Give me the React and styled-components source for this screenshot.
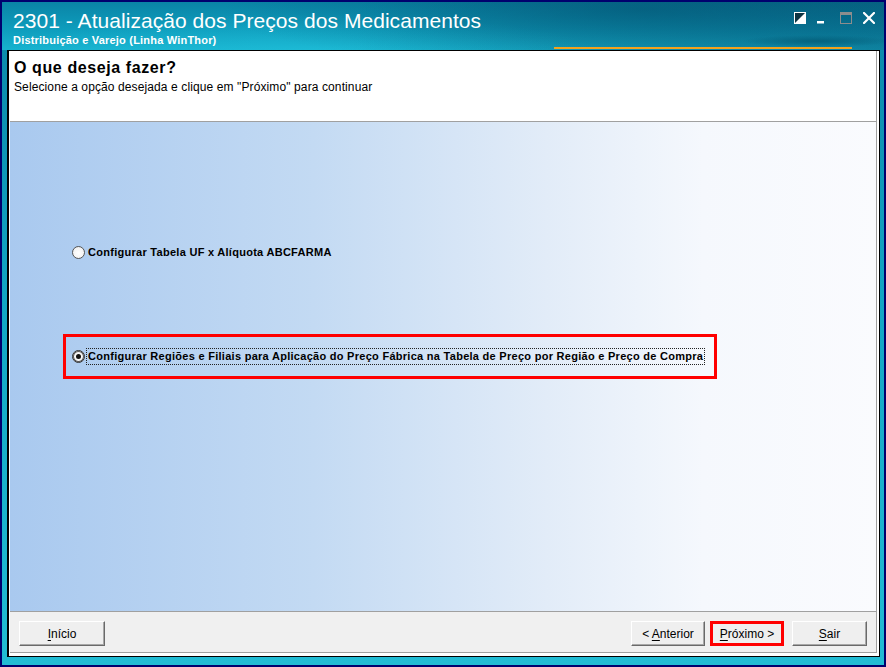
import React from 'react';
import styled, { createGlobalStyle } from 'styled-components';

const GlobalStyle = createGlobalStyle`
  html, body { margin: 0; padding: 0; background: #fff; }
  body { font-family: "Liberation Sans", Arial, sans-serif; overflow: hidden; }
  * { box-sizing: border-box; }
`;

const Window = styled.div`
  width: 886px;
  height: 667px;
  border: 2px solid #00006e;
  background: linear-gradient(180deg, #0a86a8 0%, #12a6c4 45%, #22bcd4 100%);
  display: flex;
  flex-direction: column;
`;

const TitleBar = styled.header`
  height: 48px;
  flex: none;
  display: flex;
  justify-content: space-between;
  align-items: flex-start;
  padding: 7px 9px 0 11px;
  background:
    linear-gradient(#f4a21c, #f4a21c) 552px 45px / 298px 2px no-repeat,
    radial-gradient(75px 6px at 815px 39px, rgba(4, 96, 124, 0.95), rgba(4, 96, 124, 0)),
    radial-gradient(420px 60px at 640px 8px, rgba(0, 70, 100, 0.45), rgba(0, 70, 100, 0)),
    radial-gradient(300px 40px at 300px 52px, rgba(40, 200, 225, 0.35), rgba(40, 200, 225, 0)),
    linear-gradient(90deg, rgba(0, 50, 80, 0) 40%, rgba(0, 50, 80, 0.35) 100%),
    linear-gradient(180deg, #0a84a6 0%, #0e9cbc 55%, #17b3cf 100%);
`;

const TitleText = styled.div`
  display: flex;
  flex-direction: column;
  color: #fff;
`;

const AppTitle = styled.div`
  font-size: 21px;
  line-height: 24px;
  letter-spacing: 0.05px;
  white-space: nowrap;
`;

const AppSubtitle = styled.div`
  font-size: 11px;
  font-weight: bold;
  line-height: 13px;
  letter-spacing: 0.2px;
  margin-top: 1px;
  white-space: nowrap;
`;

const Controls = styled.div`
  display: flex;
  gap: 11px;
  margin-top: 3px;
`;

const ControlIcon = styled.svg`
  width: 12px;
  height: 12px;
  display: block;
`;

const Panel = styled.main`
  flex: 1;
  margin: 0 4px 8px 5px;
  border: 1px solid #000;
  border-left-width: 2px;
  background: #fff;
  display: flex;
  padding: 0 2px 3px 1px;
  min-height: 0;
`;

const Inner = styled.div`
  flex: 1;
  display: flex;
  flex-direction: column;
  border-right: 1px solid #a0a0a0;
  border-bottom: 1px solid #a0a0a0;
  min-width: 0;
`;

const Header = styled.section`
  height: 71px;
  flex: none;
  border-bottom: 1px solid #a0a0a0;
  padding: 7px 0 0 4px;
  background: #fff;
`;

const HeaderTitle = styled.h1`
  margin: 0;
  font-size: 16px;
  line-height: 19px;
  font-weight: bold;
  letter-spacing: 0.6px;
  color: #000;
`;

const HeaderSub = styled.p`
  margin: 3px 0 0;
  font-size: 12px;
  line-height: 15px;
  letter-spacing: 0.11px;
  color: #000;
`;

const Body = styled.section`
  flex: 1;
  border-bottom: 1px solid #a0a0a0;
  background: linear-gradient(90deg, #a9c9ef 0%, #c3daf3 35%, #e2ecf8 62%, #f5f8fd 80%, #fafbfe 100%);
  display: flex;
  flex-direction: column;
  align-items: flex-start;
  gap: 59px;
  padding: 108px 0 0 53px;
`;

const OptionRow = styled.label`
  display: flex;
  align-items: center;
  height: 45px;
  border: 3px solid ${(p) => (p.$highlighted ? '#ff0000' : 'transparent')};
  padding: 0 9px 0 6px;
  cursor: default;
`;

const Radio = styled.span`
  width: 13px;
  height: 13px;
  flex: none;
  border-radius: 50%;
  border: 1px solid ${(p) => (p.$checked ? '#333' : '#555')};
  background: radial-gradient(circle at 50% 55%, #ffffff 0%, #f4f4f4 60%, #dcdcdc 100%);
  box-shadow: ${(p) => (p.$checked ? 'inset 0 0 0 1px #555' : 'none')};
  margin-right: 1px;
  display: flex;
  align-items: center;
  justify-content: center;
  &::after {
    content: '';
    width: 5px;
    height: 5px;
    border-radius: 50%;
    background: #111;
    display: ${(p) => (p.$checked ? 'block' : 'none')};
  }
`;

const OptionText = styled.span`
  font-size: 11px;
  font-weight: bold;
  line-height: 15px;
  letter-spacing: 0.28px;
  color: #000;
  padding: 0 1px;
  border: 1px dotted ${(p) => (p.$focused ? '#222' : 'transparent')};
  white-space: nowrap;
`;

const Footer = styled.footer`
  height: 40px;
  flex: none;
  background: #f0f0f0;
  display: flex;
  align-items: flex-start;
  padding: 9px 9px 0 9px;
`;

const Button = styled.button`
  height: 25px;
  width: ${(p) => p.$width || 75}px;
  margin-left: ${(p) => p.$gap || 0}px;
  margin-right: ${(p) => (p.$pushRight ? 'auto' : '0')};
  padding: 0;
  font-family: "Liberation Sans", Arial, sans-serif;
  font-size: 12px;
  color: #000;
  background: #efefef;
  border: 1px solid;
  border-color: #ffffff #6a6a6a #6a6a6a #ffffff;
  box-shadow: inset -1px -1px 0 #a8a8a8;
  outline: ${(p) => (p.$highlighted ? '3px solid #ff0000' : 'none')};
  outline-offset: -3px;
  u { text-decoration: underline; text-underline-offset: 2px; }
`;

const RestoreIcon = () => (
  <ControlIcon viewBox="0 0 12 12">
    <rect x="0.5" y="0.5" width="11" height="11" fill="#0e3442" stroke="#fff" strokeWidth="1" />
    <polygon points="11,1 11,11 1,11" fill="#fff" />
  </ControlIcon>
);

const MinimizeIcon = () => (
  <ControlIcon viewBox="0 0 12 12">
    <rect x="0" y="9" width="7" height="2.5" fill="#fff" />
  </ControlIcon>
);

const MaximizeIcon = () => (
  <ControlIcon viewBox="0 0 12 12">
    <rect x="0.5" y="0.5" width="11" height="11" fill="none" stroke="#8d8d8d" strokeWidth="1" />
    <rect x="0" y="0" width="12" height="3" fill="#8d8d8d" />
  </ControlIcon>
);

const CloseIcon = () => (
  <ControlIcon viewBox="0 0 12 12">
    <path d="M1 1 L11 11 M11 1 L1 11" stroke="#fff" strokeWidth="2.2" strokeLinecap="square" />
  </ControlIcon>
);

export default function App() {
  return (
    <>
      <GlobalStyle />
      <Window>
        <TitleBar>
          <TitleText>
            <AppTitle>2301 - Atualização dos Preços dos Medicamentos</AppTitle>
            <AppSubtitle>Distribuição e Varejo (Linha WinThor)</AppSubtitle>
          </TitleText>
          <Controls>
            <RestoreIcon />
            <MinimizeIcon />
            <MaximizeIcon />
            <CloseIcon />
          </Controls>
        </TitleBar>
        <Panel>
          <Inner>
            <Header>
              <HeaderTitle>O que deseja fazer?</HeaderTitle>
              <HeaderSub>Selecione a opção desejada e clique em "Próximo" para continuar</HeaderSub>
            </Header>
            <Body>
              <OptionRow>
                <Radio />
                <OptionText>Configurar Tabela UF x Alíquota ABCFARMA</OptionText>
              </OptionRow>
              <OptionRow $highlighted>
                <Radio $checked />
                <OptionText $focused>
                  Configurar Regiões e Filiais para Aplicação do Preço Fábrica na Tabela de Preço por Região e Preço de Compra
                </OptionText>
              </OptionRow>
            </Body>
            <Footer>
              <Button $width={86} $pushRight><u>I</u>nício</Button>
              <Button $width={74}>&lt; <u>A</u>nterior</Button>
              <Button $width={74} $gap={5} $highlighted><u>P</u>róximo &gt;</Button>
              <Button $width={75} $gap={8}><u>S</u>air</Button>
            </Footer>
          </Inner>
        </Panel>
      </Window>
    </>
  );
}
